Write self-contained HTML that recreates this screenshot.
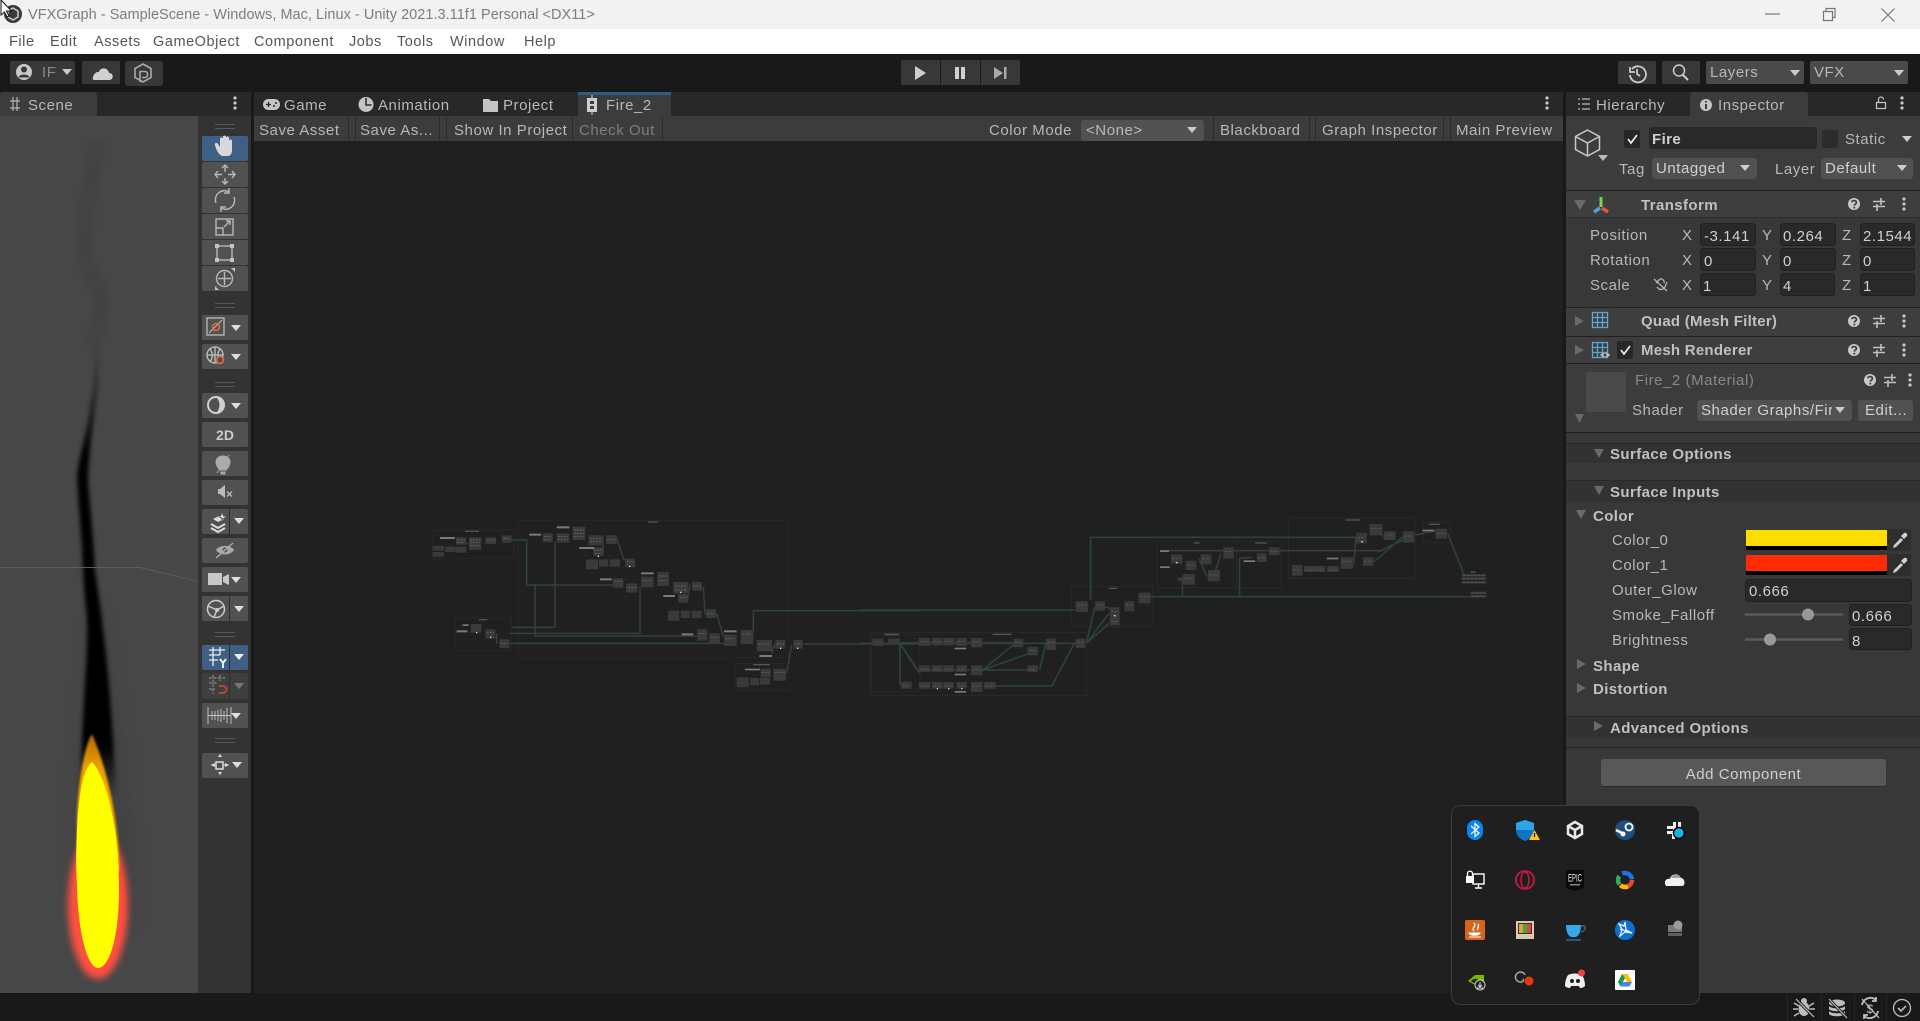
<!DOCTYPE html>
<html><head><meta charset="utf-8"><title>VFXGraph</title>
<style>
html,body{margin:0;padding:0;background:#191919}
#r{position:relative;width:1920px;height:1021px;overflow:hidden;background:#191919;font-family:"Liberation Sans",sans-serif;font-size:15px;color:#b8b8b8}
#r div{position:absolute}
.t{white-space:nowrap;line-height:20px;height:20px;letter-spacing:.55px;margin-top:1px}
.m{color:#555;letter-spacing:.55px;font-size:14.5px;margin-top:0}
.b{font-weight:bold;color:#c0c0c0;letter-spacing:.4px}
.n{color:#d0d0d0}
svg{position:absolute;left:0;top:0}
</style></head><body><div id="r">
<div style="left:0;top:0;width:1920px;height:29px;background:#f2f2f2"></div>
<div style="left:0;top:29px;width:1920px;height:25px;background:#fff"></div>
<div style="left:0;top:92px;width:251px;height:24px;background:#282828"></div>
<div style="left:0;top:92px;width:97px;height:24px;background:#3c3c3c;border-radius:3px 3px 0 0"></div>
<div style="left:0;top:116px;width:198px;height:877px;background:#474747"></div>
<div style="left:198px;top:116px;width:53px;height:877px;background:#333"></div>
<div style="left:254px;top:92px;width:1309px;height:24px;background:#282828"></div>
<div style="left:578px;top:92px;width:93px;height:24px;background:#3c3c3c;border-top:3px solid #2c5d87;box-sizing:border-box"></div>
<div style="left:254px;top:116px;width:1309px;height:25px;background:#3c3c3c"></div>
<div style="left:254px;top:141px;width:1309px;height:852px;background:#202020"></div>
<div style="left:1566px;top:92px;width:354px;height:24px;background:#282828"></div>
<div style="left:1690px;top:92px;width:118px;height:24px;background:#3c3c3c;border-radius:3px 3px 0 0"></div>
<div style="left:1566px;top:116px;width:354px;height:877px;background:#383838"></div>
<div style="left:1566px;top:116px;width:354px;height:74px;background:#3c3c3c"></div>
<div style="left:1566px;top:191px;width:354px;height:26px;background:#3e3e3e"></div>
<div style="left:1566px;top:307px;width:354px;height:29px;background:#3e3e3e"></div>
<div style="left:1566px;top:337px;width:354px;height:26px;background:#3e3e3e"></div>
<div style="left:1566px;top:364px;width:354px;height:68px;background:#3c3c3c"></div>
<div style="left:1566px;top:444px;width:354px;height:19px;background:#323232"></div>
<div style="left:1566px;top:481px;width:354px;height:21px;background:#323232"></div>
<div style="left:1566px;top:717px;width:354px;height:21px;background:#323232"></div>
<div style="left:1566px;top:190px;width:354px;height:1px;background:#1f1f1f"></div>
<div style="left:1566px;top:217px;width:354px;height:1px;background:#2e2e2e"></div>
<div style="left:1566px;top:307px;width:354px;height:1px;background:#222"></div>
<div style="left:1566px;top:336px;width:354px;height:1px;background:#222"></div>
<div style="left:1566px;top:363px;width:354px;height:1px;background:#222"></div>
<div style="left:1566px;top:432px;width:354px;height:1px;background:#222"></div>
<div style="left:1566px;top:443px;width:354px;height:1px;background:#272727"></div>
<div style="left:1566px;top:480px;width:354px;height:1px;background:#272727"></div>
<div style="left:1566px;top:716px;width:354px;height:1px;background:#272727"></div>
<div style="left:1566px;top:747px;width:354px;height:1px;background:#222"></div>
<div style="left:1601px;top:759px;width:285px;height:28px;background:#585858;border-radius:3px;border-bottom:1px solid #2a2a2a;box-sizing:border-box"></div>

<svg width="1920" height="1021" viewBox="0 0 1920 1021">
<defs>
<filter id="b1" x="-50%" y="-20%" width="200%" height="140%"><feGaussianBlur stdDeviation="1"/></filter>
<filter id="b2" x="-50%" y="-20%" width="200%" height="140%"><feGaussianBlur stdDeviation="2.2"/></filter>
<filter id="b3" x="-50%" y="-20%" width="200%" height="140%"><feGaussianBlur stdDeviation="3.5"/></filter>
<filter id="b8" x="-100%" y="-30%" width="300%" height="160%"><feGaussianBlur stdDeviation="7"/></filter>
<linearGradient id="og" x1="0" y1="0" x2="0" y2="1"><stop offset="0" stop-color="#b06800"/><stop offset=".25" stop-color="#f0a000"/><stop offset="1" stop-color="#ffc800"/></linearGradient>
<linearGradient id="sm" gradientUnits="userSpaceOnUse" x1="0" y1="345" x2="0" y2="800"><stop offset="0" stop-color="#000" stop-opacity="0"/><stop offset=".14" stop-color="#000" stop-opacity=".55"/><stop offset=".24" stop-color="#000"/><stop offset=".88" stop-color="#000"/><stop offset="1" stop-color="#000" stop-opacity="0"/></linearGradient>
<path id="da" d="M-5-3H5L0 3z"/>
<g id="hp"><circle r="6" fill="#c8c8c8"/><path d="M-2.2-1.8C-2-4 2.400-4 2.400-1.400 2.400.2.3 0 .3 1.600" fill="none" stroke="#3c3c3c" stroke-width="1.600"/><circle cx=".3" cy="3.600" r="1" fill="#3c3c3c"/></g>
<g id="sl" stroke="#c0c0c0" stroke-width="1.600" fill="none"><path d="M-6-2.500H6M-6 2.500H6M2-6V1M-2 0V7"/></g>
<g id="dt" fill="#c8c8c8"><circle cy="-5" r="1.600"/><circle r="1.600"/><circle cy="5" r="1.600"/></g>
</defs>

<!-- title icons -->
<circle cx="13" cy="14" r="9" fill="#3a3a3a"/><path d="M13 8l5 3v6l-5 3-5-3v-6z" fill="none" stroke="#ccc" stroke-width="1.500"/>
<path d="M1 0v15l3.500-3 2.500 5 2-1-2.500-5h5z" fill="#fff" stroke="#111" stroke-width="1"/>
<path d="M1765 14h15" stroke="#777" stroke-width="1.200"/>
<path d="M1823.500 11.500h9v9h-9zM1826 11V8.500h9v9h-2" fill="none" stroke="#777" stroke-width="1.200"/>
<path d="M1881.500 8.500l13 13M1894.500 8.500l-13 13" stroke="#777" stroke-width="1.200"/>

<!-- main toolbar buttons -->
<g fill="#383838">
<rect x="10" y="61" width="65" height="23" rx="2"/><rect x="82" y="61" width="38" height="23" rx="2"/><rect x="125" y="61" width="38" height="25" rx="3"/>
<rect x="901" y="60" width="119" height="25" rx="2"/>
<rect x="1618" y="61" width="38" height="23" rx="2"/><rect x="1662" y="61" width="38" height="23" rx="2"/></g>
<g fill="#4a4a4a"><rect x="1706" y="61" width="98" height="23" rx="2"/><rect x="1810" y="61" width="98" height="23" rx="2"/></g>
<path d="M940.500 60v25M980.500 60v25" stroke="#1b1b1b"/>
<circle cx="24" cy="72" r="8" fill="#c8c8c8"/><circle cx="24" cy="69.500" r="3" fill="#383838"/><path d="M18.500 77.500c1-4 10-4 11 0z" fill="#383838"/>
<use href="#da" x="67" y="72" fill="#c8c8c8"/>
<path d="M94 80h15c5 0 5-7 0-7-1-6-9-6-10-1-5-1-8 8-5 8z" fill="#d0d0d0"/>
<path d="M143 64l8 4.500v9l-8 4.500-8-4.500v-9zM140 82V71.500h5c3.500 0 3.500 6 0 6h-3" fill="none" stroke="#aaa" stroke-width="1.600"/>
<path d="M915 66l11 7-11 7z" fill="#cfcfcf"/>
<path d="M955 67h4v12h-4zM961 67h4v12h-4z" fill="#cfcfcf"/>
<path d="M994 67l9 6-9 6zM1004 67h2.500v12H1004z" fill="#a9a9a9"/>
<path d="M1632 69a8 8 0 1 1-2 6M1630 67v5h5M1637 69v5l3 2" fill="none" stroke="#ccc" stroke-width="1.800"/>
<circle cx="1679" cy="70.500" r="5.500" fill="none" stroke="#ccc" stroke-width="1.500"/><path d="M1683 75l5 5" stroke="#ccc" stroke-width="2"/>
<use href="#da" x="1795" y="73" fill="#ccc"/><use href="#da" x="1899" y="73" fill="#ccc"/>

<!-- tab icons -->
<path d="M10 101h10M10 108h10M13 97v14M17 97v14" stroke="#b5b5b5" stroke-width="1.200" fill="none"/>
<use href="#dt" x="235" y="103"/>
<rect x="263" y="99" width="17" height="11" rx="5.500" fill="#c4c4c4"/><path d="M266 104.500h5M268.500 102v5" stroke="#282828" stroke-width="1.300"/><circle cx="276" cy="103" r="1" fill="#282828"/><circle cx="274" cy="106" r="1" fill="#282828"/>
<circle cx="366" cy="104.500" r="7.500" fill="#c4c4c4"/><path d="M366 98v7h5.500" fill="none" stroke="#282828" stroke-width="1.500"/>
<path d="M483 99h6l2 2h7v11h-15z" fill="#c4c4c4"/>
<path d="M592 95v3M592 112v3" stroke="#aaa" stroke-width="1.500"/><rect x="587" y="98" width="10" height="14" fill="#cfcfcf"/><rect x="590" y="101" width="4" height="3" fill="#3c3c3c"/><rect x="590" y="106" width="4" height="3" fill="#3c3c3c"/>
<use href="#dt" x="1547" y="103"/>
<use href="#dt" x="1902" y="103"/>
<path d="M1578 99h2M1578 104h2M1578 109h2M1582 99h8M1582 104h8M1582 109h8" stroke="#bbb" stroke-width="1.200"/>
<circle cx="1706" cy="105" r="6" fill="#c4c4c4"/><path d="M1706 104v5M1706 101v1.500" stroke="#3c3c3c" stroke-width="2"/>
<path d="M1876.500 102.500h9v6h-9zM1878.500 102.500v-3a2.500 2.500 0 0 1 5 0" fill="none" stroke="#c4c4c4" stroke-width="1.200"/>

<!-- graph toolbar separators -->
<path d="M348.500 116v25M355.500 116v25M439.500 116v25M446.500 116v25M572.500 116v25M662.500 116v25M1213.500 116v25M1309.500 116v25M1315.500 116v25M1443.500 116v25M1450.500 116v25" stroke="#2b2b2b"/>
<rect x="1081" y="120" width="123" height="21" rx="3" fill="#515151"/>
<use href="#da" x="1192" y="130" fill="#ccc"/>

<!-- flame -->
<g>
<path d="M97 140c-4 40-14 70-12 115 2 20 14 25 16 45 1 20-6 35-10 50" fill="none" stroke="#000" stroke-opacity=".06" stroke-width="16" filter="url(#b3)"/>
<path d="M96 600c-15 100-25 200-22 300l60 20c0-120-15-230-38-320z" fill="#3c3c3c" opacity=".45" filter="url(#b8)"/>
<path d="M92 345C96 375 93 395 90 405 88 430 80 450 77 476 78 500 82 540 83 570 84 600 88 610 87 640 86 680 82 720 80 800L116 800C113 720 107 660 103 629 100 600 97 585 95 570 93 530 90 510 88 480 89 450 94 420 98 385 99 370 99 355 98 345z" fill="url(#sm)" filter="url(#b2)"/>
<ellipse cx="98" cy="905" rx="30" ry="74" fill="#ff5040" filter="url(#b3)"/>
<path d="M92 734C85 745 79 775 77 815V870H119C119 835 112 780 92 734z" fill="url(#og)" filter="url(#b1)"/>
<path d="M92 762C84 768 79 790 77 830 76 850 76 870 77 885 78 935 88 968 98 968 110 968 119 935 119 890 119 860 117 835 110 805 106 785 98 768 92 762z" fill="#ff0"/>
<path d="M0 567.500H140L198 581.500" fill="none" stroke="#5c5c5c" stroke-width="1"/>
</g>

<!-- scene overlay -->
<g fill="#515151">
<rect x="202" y="162" width="46" height="25" rx="2"/><rect x="202" y="188" width="46" height="25" rx="2"/><rect x="202" y="214" width="46" height="25" rx="2"/><rect x="202" y="240" width="46" height="25" rx="2"/><rect x="202" y="266" width="46" height="25" rx="2"/>
<rect x="202" y="315" width="46" height="25" rx="2"/><rect x="202" y="344" width="46" height="25" rx="2"/><rect x="202" y="393" width="46" height="25" rx="2"/><rect x="202" y="422" width="46" height="25" rx="2"/><rect x="202" y="451" width="46" height="25" rx="2"/><rect x="202" y="480" width="46" height="25" rx="2"/><rect x="202" y="509" width="46" height="25" rx="2"/><rect x="202" y="538" width="46" height="25" rx="2"/><rect x="202" y="567" width="46" height="25" rx="2"/><rect x="202" y="596" width="46" height="25" rx="2"/><rect x="202" y="703" width="46" height="25" rx="2"/><rect x="202" y="753" width="46" height="25" rx="2"/></g>
<rect x="202" y="136" width="46" height="25" rx="2" fill="#3f5f85"/><rect x="202" y="645" width="46" height="25" rx="2" fill="#3f5f85"/><rect x="202" y="673" width="46" height="26" rx="2" fill="#3f3f3f"/>
<path d="M215 124.500h20M215 128.500h20M215 303.500h20M215 307.500h20M215 382.500h20M215 386.500h20M215 632.500h20M215 636.500h20M215 738.500h20M215 742.500h20" stroke="#585858"/>
<path d="M229.500 509v25M229.500 596v25M229.500 645v25M229.500 673v26" stroke="#2e2e2e"/>
<!-- hand -->
<path d="M222 156c-4-2-6-7-7-11-1-2 2-3 3-1l2 3v-8c0-2 3-2 3 0v6-8c0-2 3-2 3 0v8-7c0-2 3-2 3 0v8-5c0-2 3-2 3 0v9c0 4-2 6-4 6z" fill="#d8d8d8"/>
<!-- move -->
<g fill="none" stroke="#b8b8b8" stroke-width="1.400"><path d="M225 165v7M225 178v6M215 174.500h7M228 174.500h7M222 168l3-3 3 3M222 181l3 3 3-3M218 171l-3 3.500 3 3.500M232 171l3 3.500-3 3.500"/>
<path d="M216 203a9 9 0 0 1 13-11M234 197a9 9 0 0 1-13 11M229 188v5h-5M221 212v-5h5"/>
<rect x="216" y="219" width="17" height="16"/><path d="M216 228h7v7M224 227l6-6M226 221h4v4"/>
<rect x="217" y="246" width="15" height="14"/></g>
<g fill="#c4c4c4"><rect x="215" y="244" width="4" height="4"/><rect x="230" y="244" width="4" height="4"/><rect x="215" y="258" width="4" height="4"/><rect x="230" y="258" width="4" height="4"/></g>
<g fill="none" stroke="#b8b8b8" stroke-width="1.400"><circle cx="224.500" cy="278.500" r="8"/><path d="M224.500 272v13M218 278.500h13"/></g>
<path d="M231 268h4v4zM215 290v-4l4 4z" fill="#c4c4c4"/>
<rect x="207" y="318" width="17" height="17" fill="none" stroke="#c4c4c4" stroke-width="1.200"/><path d="M209 333l13-13" stroke="#c4c4c4"/><circle cx="216" cy="327" r="3.500" fill="none" stroke="#e8673f" stroke-width="1.600"/>
<g fill="none" stroke="#c4c4c4" stroke-width="1.300"><circle cx="215" cy="355" r="8"/><path d="M207 355h16M215 347v16M210 349c3 4 3 9 0 13M220 349c-3 4-3 9 0 13"/></g><circle cx="220" cy="360" r="3.500" fill="#515151" stroke="#e8673f" stroke-width="1.600"/>
<circle cx="216" cy="405" r="8" fill="none" stroke="#d0d0d0" stroke-width="2"/><path d="M216 397a8 8 0 0 1 0 16 11 11 0 0 0 0-16z" fill="#d0d0d0"/>
<use href="#da" x="236" y="328" fill="#ddd"/><use href="#da" x="236" y="357" fill="#ddd"/><use href="#da" x="236" y="406" fill="#ddd"/>
<path d="M220 470c-2-2-4-5-4-8 0-8 14-8 14 0 0 3-2 6-4 8zM221 472h4v2h-4zM217 473l12-18" fill="#aaa" stroke="#aaa"/>
<path d="M218 489h2l5-4v13l-5-4h-2z" fill="#bbb"/><path d="M227 491.500l5 5M232 491.500l-5 5" stroke="#bbb" stroke-width="1.300"/>
<path d="M211 524l7 4 7-4M211 528l7 4 7-4" fill="none" stroke="#ddd" stroke-width="2"/><path d="M213 519l5 3 6-3-5-3zM222 513l1 3 3 1-3 1-1 3-1-3-3-1 3-1z" fill="#ddd"/>
<use href="#da" x="239" y="521" fill="#ddd"/>
<path d="M216 550c3-5 14-6 18 0-4 6-14 6-18 0z" fill="#aaa"/><circle cx="225" cy="550" r="2.500" fill="#515151"/><path d="M216 558l17-15" stroke="#aaa" stroke-width="1.500"/>
<path d="M208 573h14v12h-14zM223 577l6-3v11l-6-3z" fill="#c8c8c8"/><use href="#da" x="236" y="580" fill="#ddd"/>
<g fill="none" stroke="#ccc" stroke-width="1.500"><circle cx="216" cy="609" r="8.500"/><path d="M208 606l9 4 7-4M217 610l-3 7"/></g><circle cx="217" cy="610" r="2" fill="#ccc"/><use href="#da" x="239" y="609" fill="#ddd"/>
<g stroke="#e8eef5" stroke-width="1.300" fill="none"><path d="M209 650h16M209 655h11M209 660h9M213 647v19M220 647v8"/></g><path d="M220 659l3 4 3-4M223 663v5" stroke="#e8eef5" stroke-width="2" fill="none"/><use href="#da" x="239" y="657" fill="#eee"/>
<g stroke="#8a8a8a" stroke-width="1.200" fill="none" stroke-dasharray="3 1.500"><path d="M209 678h16M209 683h8M209 689h6M213 675v19M220 675v6"/></g><path d="M219 686h4a3.500 3.500 0 0 1 0 7h-4" fill="none" stroke="#b5492f" stroke-width="2"/><use href="#da" x="239" y="686" fill="#777"/>
<path d="M208 707v17M212 711v9M215 711v9M218 710v11M221 709v13M224 711v9M227 708v15M231 707v17M208 715.500h23" stroke="#c0c0c0" stroke-width="1"/><use href="#da" x="236" y="716" fill="#ddd"/>
<path d="M211 765l4-2v4zM229 765l-4-2v4zM218 757l2-3 2 3zM218 772l2 3 2-3z" fill="#ddd"/><rect x="216" y="762" width="7" height="7" fill="none" stroke="#ddd" stroke-width="1.500"/><path d="M215 765h-4M229 765h-5" stroke="#ddd"/><use href="#da" x="237" y="765" fill="#ddd"/>

<!-- graph group 1 -->
<g transform="translate(420 500) scale(.33333)">
<g fill="none" stroke="#292929" stroke-width="2.500"><rect x="38" y="90" width="245" height="85"/><rect x="295" y="62" width="810" height="410"/><rect x="105" y="352" width="170" height="100"/><rect x="945" y="490" width="160" height="80"/><rect x="1355" y="405" width="145" height="170"/></g>
<g fill="none" stroke="#2f4438" stroke-width="4.500">
<path d="M275 120H320V255H580M345 255V408H832M405 125V382H275M270 400H660V260M265 430H915M1000 400V332H1500M1150 432H1500M1440 428V555M1440 430L1500 520M590 115L612 180M850 260L855 345M890 340L910 410M1100 520L1115 435M1055 460L1065 432M550 135V160M805 290L810 250M230 400V430M145 130H110"/></g>
<g fill="#3a3a3a">
<rect x="108" y="112" width="30" height="22"/><rect x="147" y="112" width="37" height="37"/><rect x="196" y="112" width="32" height="20"/><rect x="245" y="106" width="30" height="22"/><rect x="38" y="138" width="34" height="14"/><rect x="75" y="140" width="30" height="16"/><rect x="106" y="140" width="32" height="18"/><rect x="38" y="156" width="34" height="14"/>
<rect x="368" y="100" width="30" height="26"/><rect x="410" y="100" width="38" height="28"/><rect x="458" y="80" width="38" height="40"/><rect x="505" y="106" width="46" height="30"/><rect x="558" y="106" width="32" height="26"/><rect x="520" y="142" width="30" height="26"/><rect x="498" y="178" width="36" height="30"/><rect x="537" y="178" width="28" height="22"/><rect x="570" y="178" width="30" height="22"/><rect x="615" y="176" width="30" height="26"/>
<rect x="578" y="235" width="32" height="28"/><rect x="618" y="250" width="34" height="28"/><rect x="663" y="230" width="38" height="32"/><rect x="712" y="216" width="35" height="42"/><rect x="760" y="246" width="45" height="34"/><rect x="816" y="246" width="30" height="26"/><rect x="775" y="282" width="30" height="26"/><rect x="744" y="332" width="34" height="30"/><rect x="782" y="332" width="28" height="22"/><rect x="815" y="332" width="30" height="22"/><rect x="858" y="328" width="30" height="26"/>
<rect x="832" y="388" width="30" height="34"/><rect x="868" y="400" width="32" height="28"/><rect x="912" y="404" width="38" height="34"/><rect x="962" y="390" width="38" height="42"/><rect x="1010" y="420" width="46" height="34"/><rect x="1066" y="420" width="30" height="26"/><rect x="1120" y="420" width="28" height="26"/>
<rect x="152" y="372" width="32" height="26"/><rect x="196" y="388" width="30" height="28"/><rect x="238" y="418" width="30" height="26"/>
<rect x="1022" y="506" width="30" height="26"/><rect x="1060" y="506" width="38" height="36"/><rect x="950" y="532" width="36" height="30"/><rect x="990" y="534" width="28" height="22"/><rect x="1020" y="534" width="30" height="20"/>
<rect x="1360" y="416" width="30" height="22"/><rect x="1405" y="416" width="32" height="16"/><rect x="1445" y="545" width="30" height="20"/></g>
<g fill="#7a7a7a">
<rect x="60" y="111" width="45" height="6"/><rect x="328" y="101" width="35" height="6"/><rect x="410" y="79" width="38" height="6"/><rect x="478" y="141" width="45" height="6"/><rect x="540" y="235" width="35" height="6"/><rect x="663" y="217" width="38" height="6"/><rect x="730" y="285" width="35" height="6"/><rect x="785" y="400" width="35" height="6"/><rect x="912" y="391" width="38" height="6"/><rect x="1018" y="465" width="38" height="6"/><rect x="110" y="391" width="32" height="6"/><rect x="128" y="373" width="18" height="5"/><rect x="975" y="506" width="45" height="5"/>
<rect x="135" y="92" width="42" height="4" fill="#555"/><rect x="685" y="64" width="28" height="4" fill="#555"/><rect x="176" y="357" width="26" height="4" fill="#555"/><rect x="1000" y="492" width="50" height="4" fill="#555"/><rect x="1395" y="402" width="42" height="4" fill="#555"/></g>
<g fill="#ddd"><rect x="533" y="167" width="4" height="4"/><rect x="627" y="197" width="4" height="4"/><rect x="780" y="275" width="4" height="4"/><rect x="168" y="396" width="4" height="4"/><rect x="210" y="410" width="4" height="4"/><rect x="1080" y="443" width="4" height="4"/><rect x="1131" y="443" width="4" height="4"/></g>
<g stroke="#6e6e6e" stroke-width="2" stroke-dasharray="6 3"><path d="M112 120h22M112 127h20M150 120h30M150 128h30M150 136h30M200 120h24M250 115h20M372 110h22M372 118h20M414 110h30M414 118h30M462 90h30M462 100h30M462 110h30M510 115h36M510 125h36M562 118h24M520 150h26M524 160h20M620 185h20M584 245h22M624 262h24M668 242h28M716 228h26M716 242h26M765 258h36M765 270h36M820 258h22M780 292h20M862 340h20M836 400h20M872 412h22M916 415h28M966 402h28M1014 432h36M1070 432h22M1124 432h20M200 398h22M242 430h20M1026 518h22M1064 518h30"/></g>
</g>

<!-- graph group 2 -->
<g transform="translate(860 500) scale(.40816 .33333)">
<g fill="none" stroke="#292929" stroke-width="1"><rect x="25" y="398" width="530" height="188" vector-effect="non-scaling-stroke"/><rect x="518" y="260" width="200" height="120" vector-effect="non-scaling-stroke"/><rect x="728" y="125" width="195" height="138" vector-effect="non-scaling-stroke"/><rect x="922" y="125" width="110" height="138" vector-effect="non-scaling-stroke"/><rect x="1050" y="55" width="310" height="180" vector-effect="non-scaling-stroke"/><rect x="1380" y="68" width="65" height="60" vector-effect="non-scaling-stroke"/></g>
<g fill="none" stroke="#2c4240" stroke-width="1.600">
<path vector-effect="non-scaling-stroke" d="M0 430H530M0 330H525M565 300V112H1215M700 290H1500M98 430V555M98 430L140 510H270M300 510L380 430M300 510L415 460M300 510H410M440 510L455 430M330 558H470L525 430M555 430L575 320M555 430L610 340M555 430L610 370M600 320L612 325M100 428H375M790 290V235M930 290V175L960 172M870 215L885 160M1440 100L1480 225M1360 105L1410 92M1260 185L1330 110M1270 155L1330 120M1210 190L1215 110M1250 80L1285 110M830 175L850 230"/>
<path vector-effect="non-scaling-stroke" stroke="#3d3a3a" d="M735 152H1280"/></g>
<g fill="#3a3a3a">
<rect x="30" y="416" width="25" height="20"/><rect x="70" y="416" width="28" height="16"/><rect x="144" y="414" width="28" height="24"/><rect x="176" y="414" width="26" height="22"/><rect x="204" y="414" width="28" height="22"/><rect x="236" y="414" width="26" height="24"/><rect x="272" y="414" width="28" height="28"/><rect x="376" y="416" width="24" height="26"/><rect x="410" y="440" width="26" height="26"/><rect x="456" y="416" width="24" height="34"/><rect x="528" y="416" width="24" height="28"/>
<rect x="144" y="496" width="28" height="20"/><rect x="176" y="496" width="26" height="20"/><rect x="204" y="496" width="26" height="20"/><rect x="236" y="496" width="26" height="20"/><rect x="272" y="496" width="28" height="30"/><rect x="410" y="496" width="26" height="20"/>
<rect x="100" y="546" width="26" height="20"/><rect x="144" y="546" width="28" height="20"/><rect x="176" y="546" width="26" height="20"/><rect x="204" y="546" width="26" height="20"/><rect x="236" y="546" width="26" height="20"/><rect x="272" y="546" width="28" height="30"/><rect x="304" y="546" width="28" height="20"/>
<rect x="528" y="304" width="30" height="32"/><rect x="576" y="304" width="24" height="28"/><rect x="612" y="322" width="24" height="32"/><rect x="612" y="354" width="24" height="22"/><rect x="648" y="304" width="24" height="30"/><rect x="682" y="278" width="30" height="32"/>
<rect x="762" y="163" width="28" height="28"/><rect x="798" y="182" width="26" height="28"/><rect x="835" y="163" width="26" height="30"/><rect x="790" y="222" width="30" height="32"/><rect x="852" y="210" width="30" height="34"/><rect x="890" y="142" width="26" height="34"/><rect x="778" y="232" width="12" height="10"/>
<rect x="972" y="160" width="24" height="26"/><rect x="1002" y="142" width="26" height="24"/>
<rect x="1216" y="98" width="26" height="32"/><rect x="1248" y="72" width="32" height="34"/><rect x="1284" y="94" width="28" height="26"/><rect x="1330" y="94" width="28" height="34"/><rect x="1058" y="195" width="26" height="32"/><rect x="1088" y="198" width="28" height="18"/><rect x="1114" y="198" width="26" height="18"/><rect x="1145" y="198" width="28" height="18"/><rect x="1178" y="172" width="30" height="34"/><rect x="1232" y="172" width="26" height="26"/>
<rect x="1410" y="86" width="28" height="30"/><rect x="1474" y="222" width="60" height="8"/><rect x="1474" y="232" width="60" height="8"/><rect x="1474" y="243" width="60" height="8"/><rect x="1495" y="275" width="40" height="8"/><rect x="1495" y="285" width="40" height="8"/></g>
<g fill="#7a7a7a"><rect x="232" y="443" width="28" height="5"/><rect x="232" y="521" width="28" height="5"/><rect x="232" y="573" width="28" height="5"/><rect x="735" y="151" width="22" height="5"/><rect x="735" y="199" width="24" height="5"/><rect x="940" y="181" width="28" height="5"/><rect x="1144" y="173" width="28" height="5"/><rect x="1378" y="89" width="28" height="5"/>
<g fill="#555"><rect x="60" y="401" width="36" height="4"/><rect x="325" y="401" width="46" height="4"/><rect x="610" y="263" width="20" height="4"/><rect x="818" y="127" width="14" height="4"/><rect x="968" y="127" width="28" height="4"/><rect x="1190" y="58" width="34" height="4"/><rect x="1394" y="71" width="26" height="4"/><rect x="1496" y="214" width="12" height="4"/></g></g>
<g fill="#ddd"><rect x="622" y="345" width="4" height="4"/><rect x="188" y="564" width="3" height="4"/><rect x="216" y="564" width="3" height="4"/><rect x="248" y="564" width="3" height="4"/><rect x="774" y="186" width="4" height="4"/><rect x="1228" y="123" width="4" height="4"/></g>
<g stroke="#6e6e6e" stroke-width="1.500" stroke-dasharray="6 3"><path d="M148 425h20M180 425h18M208 425h20M240 425h18M276 425h20M380 428h16M414 452h18M460 428h16M532 428h16M148 508h20M180 508h18M208 508h18M240 508h18M276 508h20M414 508h18M148 558h20M180 558h18M208 558h18M240 558h18M276 558h20M308 558h20M104 558h18M532 315h22M580 315h16M616 335h16M616 365h16M652 315h16M686 290h22M766 175h20M802 195h18M839 175h18M794 235h22M856 225h22M894 155h18M976 172h16M1006 155h18M1220 112h18M1252 85h24M1288 105h20M1334 108h20M1062 210h18M1092 210h20M1118 210h18M1149 210h20M1182 185h22M1236 185h18M1414 100h20M1478 226h52M1478 236h52M1478 247h52M1499 279h32M1499 289h32"/></g>
</g>

<!-- inspector icons -->
<path d="M1587.500 130l12 6.500v13l-12 6.500-12-6.500v-13zM1575.500 136.500l12 6.500 12-6.500M1587.500 143v13" fill="none" stroke="#c8c8c8" stroke-width="1.500"/>
<use href="#da" x="1603" y="158" fill="#bbb"/>
<rect x="1624" y="130" width="16" height="18" rx="2" fill="#272727"/><path d="M1628 139l3 4 6-8" fill="none" stroke="#e8e8e8" stroke-width="1.800"/>
<rect x="1649" y="127" width="168" height="22" rx="3" fill="#292929"/>
<rect x="1822" y="130" width="16" height="18" rx="2" fill="#2c2c2c"/><use href="#da" x="1907" y="139" fill="#ccc"/>
<g fill="#515151"><rect x="1652" y="158" width="105" height="21" rx="3"/><rect x="1821" y="158" width="92" height="21" rx="3"/><rect x="1697" y="400" width="155" height="21" rx="3"/><rect x="1858" y="400" width="55" height="21" rx="3"/></g>
<use href="#da" x="1745" y="168" fill="#ccc"/><use href="#da" x="1902" y="168" fill="#ccc"/>
<path d="M1574 200h12l-6 10z" fill="#6a6a6a"/>
<path d="M1601 197v10" stroke="#7fd04b" stroke-width="3"/><path d="M1600 208l-6 4" stroke="#4aa3e0" stroke-width="3.500"/><path d="M1602 208l6 4" stroke="#e0573f" stroke-width="3.500"/>
<use href="#hp" x="1854" y="204"/><use href="#sl" x="1879" y="204"/><use href="#dt" x="1904" y="204"/>
<g fill="#292929" stroke="#202020"><rect x="1700.500" y="223.500" width="55" height="22" rx="3"/><rect x="1780.500" y="223.500" width="55" height="22" rx="3"/><rect x="1860.500" y="223.500" width="54" height="22" rx="3"/><rect x="1700.500" y="248.500" width="55" height="22" rx="3"/><rect x="1780.500" y="248.500" width="55" height="22" rx="3"/><rect x="1860.500" y="248.500" width="54" height="22" rx="3"/><rect x="1700.500" y="273.500" width="55" height="22" rx="3"/><rect x="1780.500" y="273.500" width="54" height="22" rx="3"/><rect x="1860.500" y="273.500" width="54" height="22" rx="3"/>
<rect x="1745.500" y="579.500" width="166" height="22" rx="3"/><rect x="1849.500" y="604.500" width="62" height="21" rx="3"/><rect x="1849.500" y="628.500" width="62" height="21" rx="3"/></g>
<g fill="none" stroke="#b5b5b5" stroke-width="1.300"><path d="M1656 283l4-4c2-1 5 2 4 4M1660 290l-3-3M1667 282l-2 5c-1 2-3 3-5 2M1654 279l13 12"/></g>
<path d="M1575 316l9 5-9 5z" fill="#6a6a6a"/>
<path d="M1575 345l9 5-9 5z" fill="#6a6a6a"/>
<g fill="none" stroke="#5aa7cf" stroke-width="1.300"><rect x="1592.500" y="312.500" width="15" height="15"/><path d="M1597.500 312v16M1602.500 312v16M1592 317.500h16M1592 322.500h16"/><rect x="1592.500" y="342.500" width="15" height="15"/><path d="M1597.500 342v16M1602.500 342v16M1592 347.500h16M1592 352.500h16"/></g>
<path d="M1600 355c3-3 8-3 10 0-2 3-7 3-10 0z" fill="#c0c0c0"/><circle cx="1605" cy="355" r="1.500" fill="#3e3e3e"/>
<rect x="1617" y="341" width="16" height="18" rx="2" fill="#272727"/><path d="M1621 350l3 4 6-8" fill="none" stroke="#e8e8e8" stroke-width="1.800"/>
<use href="#hp" x="1854" y="321"/><use href="#sl" x="1879" y="321"/><use href="#dt" x="1904" y="321"/>
<use href="#hp" x="1854" y="350"/><use href="#sl" x="1879" y="350"/><use href="#dt" x="1904" y="350"/>
<use href="#hp" x="1870" y="380"/><use href="#sl" x="1890" y="380"/><use href="#dt" x="1910" y="380"/>
<rect x="1586" y="372" width="40" height="40" fill="#4a4a4a"/>
<path d="M1575 414h9l-4.500 9z" fill="#6a6a6a"/>
<use href="#da" x="1840" y="410" fill="#ccc"/>
<g fill="#6a6a6a"><path d="M1594 449h10l-5 9zM1594 486h10l-5 9zM1576 510h10l-5 9zM1577 659l9 5-9 5zM1577 683l9 5-9 5zM1594 721l9 5-9 5z"/></g>
<rect x="1746" y="530" width="141" height="16" fill="#ffdd00"/><rect x="1746" y="546" width="141" height="4" fill="#000"/>
<rect x="1746" y="555" width="141" height="16" fill="#ff2a00"/><rect x="1746" y="571" width="141" height="4" fill="#000"/>
<rect x="1887" y="529" width="24" height="22" rx="2" fill="#2e2e2e"/><rect x="1887" y="554" width="24" height="22" rx="2" fill="#2e2e2e"/>
<g fill="#d0d0d0"><path d="M1894 545l7-7 2 2-7 7-3 1zM1901 536l3-3c2-1 4 1 3 3l-3 3z"/><path d="M1894 570l7-7 2 2-7 7-3 1zM1901 561l3-3c2-1 4 1 3 3l-3 3z"/></g>
<path d="M1745 614.500h98M1745 639.500h98" stroke="#5a5a5a" stroke-width="2.500"/>
<circle cx="1808" cy="614.500" r="6" fill="#999"/><circle cx="1770" cy="639.500" r="6" fill="#999"/>

<!-- status -->
<path d="M1787.500 993v28M1821.500 993v28M1854.500 993v28M1886.500 993v28" stroke="#262626"/>
<g fill="#bdbdbd"><ellipse cx="1804" cy="1009" rx="5.500" ry="7"/><circle cx="1804" cy="1001" r="3"/></g>
<path d="M1794 1003l5 3M1814 1003l-5 3M1793 1009h5M1815 1009h-5M1794 1016l5-3M1814 1016l-5-3" stroke="#bdbdbd" stroke-width="1.500"/><path d="M1796 999l18 18" stroke="#191919" stroke-width="3"/><path d="M1796 999l18 18" stroke="#bdbdbd" stroke-width="1.200"/>
<g fill="#bdbdbd"><ellipse cx="1837" cy="1003" rx="8" ry="3.500"/><path d="M1829 1006c2 3 14 3 16 0v3c-2 3-14 3-16 0zM1829 1011c2 3 14 3 16 0v3c-2 3-14 3-16 0z"/></g><path d="M1829 999l18 19" stroke="#191919" stroke-width="3"/><path d="M1829 999l18 19" stroke="#bdbdbd" stroke-width="1.200"/>
<g fill="none" stroke="#bdbdbd" stroke-width="1.800"><path d="M1862 1005a8.500 8.500 0 0 1 14-5M1878 1011a8.500 8.500 0 0 1-14 5M1876 997v4h-4M1864 1019v-4h4"/></g><text x="1870" y="1013" fill="#bdbdbd" font-family="Liberation Sans,sans-serif" font-size="12" text-anchor="middle">$</text><path d="M1862 999l17 19" stroke="#bdbdbd" stroke-width="1.200"/>
<circle cx="1902" cy="1008" r="8.500" fill="none" stroke="#bdbdbd" stroke-width="1.300"/><path d="M1898 1008l3 3 5-5" fill="none" stroke="#bdbdbd" stroke-width="1.600"/>

<!-- tray -->
<rect x="1451.500" y="805.500" width="248" height="199" rx="9" fill="#1f1f1f" stroke="#3b3b3b"/>
<rect x="1467" y="820" width="16" height="20" rx="8" fill="#0a84f0"/><path d="M1471 826l8 7-4 3.500v-13l4 3.500-8 7" fill="none" stroke="#fff" stroke-width="1.200"/>
<path d="M1525 820l9 3v7c0 6-4 9-9 11-5-2-9-5-9-11v-7z" fill="#0c73c7"/><path d="M1525 820l9 3v7h-18v-7z" fill="#29a5e8"/><path d="M1529 840l5.500-10 5.500 10z" fill="#ffc800"/><path d="M1534.500 833v4" stroke="#222" stroke-width="1.300"/>
<path d="M1575 822l7 4v8l-7 4-7-4v-8zM1575 830v8M1575 830l-7-4M1575 830l7-4" fill="none" stroke="#e8e8e8" stroke-width="2.500"/>
<circle cx="1625" cy="830" r="10" fill="#1c4f7e"/><circle cx="1629" cy="827" r="3.500" fill="none" stroke="#fff" stroke-width="1.800"/><path d="M1616 830l8 4" stroke="#fff" stroke-width="2.500"/><circle cx="1623" cy="834" r="2.500" fill="#fff"/>
<path d="M1667 826h8v3h-8zM1673 822h3v8h-3zM1667 831h8v3h-8zM1672 833h3v6h-3zM1678 822h3v6h-3z" fill="#eee"/><circle cx="1679" cy="833" r="5.500" fill="#11b5e4" stroke="#000" stroke-width="1.500"/>
<rect x="1473" y="874" width="11" height="10" fill="#1f1f1f" stroke="#fff" stroke-width="1.400"/><path d="M1475 888h7M1478.500 884v4" stroke="#fff" stroke-width="1.400"/><rect x="1466" y="876" width="8" height="7" fill="#fff"/><path d="M1467.500 876v-2.500c0-3 5-3 5 0v2.500" fill="none" stroke="#fff" stroke-width="1.300"/>
<circle cx="1525" cy="880" r="9" fill="none" stroke="#c9183b" stroke-width="1.800"/><ellipse cx="1525" cy="880" rx="4" ry="8" fill="none" stroke="#c9183b" stroke-width="1.500"/>
<path d="M1566 870h18v18l-9 3-9-3z" fill="#0a0a0a"/><text x="1568" y="881.500" fill="#eee" font-family="Liberation Sans,sans-serif" font-size="11" textLength="14" lengthAdjust="spacingAndGlyphs">EPIC</text><rect x="1570" y="884" width="10" height="1.500" fill="#888"/>
<circle cx="1625" cy="880" r="7" fill="none" stroke="#e8453c" stroke-width="4.500" stroke-dasharray="14 30"/><circle cx="1625" cy="880" r="7" fill="none" stroke="#1a73e8" stroke-width="4.500" stroke-dasharray="13 31" stroke-dashoffset="14"/><circle cx="1625" cy="880" r="7" fill="none" stroke="#34a853" stroke-width="4.500" stroke-dasharray="9 35" stroke-dashoffset="27"/><circle cx="1625" cy="880" r="7" fill="none" stroke="#fbbc04" stroke-width="4.500" stroke-dasharray="8 36" stroke-dashoffset="36"/>
<path d="M1666 886c-3-5 1-8 4-7 1-6 9-6 11-1 4 0 5 8 1 8z" fill="#f0f0f0"/><path d="M1671 878c2-5 8-5 10 0z" fill="#9e9e9e"/>
<rect x="1465" y="920" width="20" height="20" rx="2" fill="#d4651e"/><path d="M1474 923c3 3-3 5 0 8M1478 924c2 3-2 4 0 6" fill="none" stroke="#fff" stroke-width="1.300"/><path d="M1469 933h11c0 3-11 3-11 0zM1469 937h12" stroke="#fff" fill="#fff"/>
<rect x="1516" y="921" width="18" height="18" fill="#d8ccb0"/><rect x="1518" y="923" width="14" height="11" fill="#333"/><rect x="1519" y="924" width="4" height="9" fill="#e8a030"/><rect x="1523" y="924" width="4" height="9" fill="#39a845"/><rect x="1527" y="924" width="4" height="9" fill="#e84040"/>
<path d="M1566 925h15c0 8-3 12-6 12h-3c-3 0-6-4-6-12z" fill="#35a8e8"/><path d="M1581 926h3c2 0 2 5-3 6" fill="none" stroke="#1e6ea8" stroke-width="1.400"/><path d="M1566 940h15" stroke="#1e6ea8" stroke-width="1.500"/>
<circle cx="1625" cy="930" r="10" fill="#0e6fd2"/><path d="M1625 922l1 8 6 3-7-1-5 4 2-7-3-5 5 2zM1620 929l11 4" fill="none" stroke="#e8f2ff" stroke-width="1.300"/>
<rect x="1668" y="925" width="14" height="7" fill="#7a7a7a"/><rect x="1668" y="933" width="14" height="3" fill="#5f5f5f"/><circle cx="1678" cy="925" r="4.500" fill="#9a9a9a"/>
<path d="M1468 981l7-6h9v10h-9z" fill="#76b900"/><path d="M1471 981c3-3 6-3 9 0-3 3-6 3-9 0z" fill="#1f1f1f"/><circle cx="1480" cy="985" r="5" fill="#222" stroke="#ccc"/><path d="M1480 982v4M1478 985l2 2 2-2M1477 988h6" stroke="#ddd" fill="none"/>
<path d="M1525 975a5 5 0 1 0-4 7c2 0 3-2 2-3" fill="none" stroke="#aaa" stroke-width="1.500"/><circle cx="1529" cy="981" r="4.500" fill="#e6380f"/>
<path d="M1568 975c4-2 10-2 14 0 2 3 3 7 3 11-2 2-4 2-5 2l-1-2h-8l-1 2c-1 0-3 0-5-2 0-4 1-8 3-11z" fill="#eee"/><circle cx="1572" cy="981" r="2" fill="#1f1f1f"/><circle cx="1578" cy="981" r="2" fill="#1f1f1f"/><circle cx="1581.500" cy="973" r="3.500" fill="#ed4245"/>
<rect x="1615" y="970" width="20" height="20" rx="1" fill="#fff"/><path d="M1622 974h6l4 8h-5z" fill="#fbbc04"/><path d="M1622 974l-4 8 2.500 4.500 4.500-8.500z" fill="#0f9d58"/><path d="M1620.500 986.500l2-4.500h9.500l-2.500 4.500z" fill="#4285f4"/>
</svg>

<!-- text -->
<div class="t" style="left:28px;top:5px;margin-top:0;color:#7d7d7d;letter-spacing:.03px;font-size:14.500px">VFXGraph - SampleScene - Windows, Mac, Linux - Unity 2021.3.11f1 Personal &lt;DX11&gt;</div>
<div class="t m" style="left:9px;top:32px">File</div><div class="t m" style="left:50px;top:32px">Edit</div><div class="t m" style="left:94px;top:32px">Assets</div><div class="t m" style="left:153px;top:32px">GameObject</div><div class="t m" style="left:254px;top:32px">Component</div><div class="t m" style="left:349px;top:32px">Jobs</div><div class="t m" style="left:397px;top:32px">Tools</div><div class="t m" style="left:450px;top:32px">Window</div><div class="t m" style="left:524px;top:32px">Help</div>
<div class="t" style="left:42px;top:62px;color:#8a8a8a">IF</div>
<div class="t" style="left:1710px;top:62px">Layers</div><div class="t" style="left:1814px;top:62px">VFX</div>
<div class="t" style="left:28px;top:95px">Scene</div><div class="t" style="left:284px;top:95px">Game</div><div class="t" style="left:378px;top:95px">Animation</div><div class="t" style="left:503px;top:95px">Project</div><div class="t" style="left:606px;top:95px">Fire_2</div>
<div class="t" style="left:259px;top:120px">Save Asset</div><div class="t" style="left:360px;top:120px">Save As...</div><div class="t" style="left:454px;top:120px">Show In Project</div><div class="t" style="left:579px;top:120px;color:#7d7d7d">Check Out</div>
<div class="t" style="left:989px;top:120px">Color Mode</div><div class="t" style="left:1086px;top:120px">&lt;None&gt;</div>
<div class="t" style="left:1220px;top:120px">Blackboard</div><div class="t" style="left:1322px;top:120px">Graph Inspector</div><div class="t" style="left:1456px;top:120px">Main Preview</div>
<div class="t" style="left:1596px;top:95px">Hierarchy</div><div class="t" style="left:1718px;top:95px">Inspector</div>
<div class="t n b" style="left:1652px;top:129px">Fire</div><div class="t" style="left:1845px;top:129px">Static</div>
<div class="t" style="left:1619px;top:159px">Tag</div><div class="t n" style="left:1656px;top:158px">Untagged</div><div class="t" style="left:1775px;top:159px">Layer</div><div class="t n" style="left:1825px;top:158px">Default</div>
<div class="t b" style="left:1641px;top:195px">Transform</div>
<div class="t" style="left:1590px;top:225px">Position</div><div class="t" style="left:1590px;top:250px">Rotation</div><div class="t" style="left:1590px;top:275px">Scale</div>
<div class="t" style="left:1682px;top:225px">X</div><div class="t" style="left:1762px;top:225px">Y</div><div class="t" style="left:1842px;top:225px">Z</div>
<div class="t" style="left:1682px;top:250px">X</div><div class="t" style="left:1762px;top:250px">Y</div><div class="t" style="left:1842px;top:250px">Z</div>
<div class="t" style="left:1682px;top:275px">X</div><div class="t" style="left:1762px;top:275px">Y</div><div class="t" style="left:1842px;top:275px">Z</div>
<div class="t n" style="left:1704px;top:226px">-3.141</div><div class="t n" style="left:1783px;top:226px">0.264</div><div class="t n" style="left:1863px;top:226px">2.1544</div>
<div class="t n" style="left:1704px;top:251px">0</div><div class="t n" style="left:1783px;top:251px">0</div><div class="t n" style="left:1863px;top:251px">0</div>
<div class="t n" style="left:1703px;top:276px">1</div><div class="t n" style="left:1783px;top:276px">4</div><div class="t n" style="left:1863px;top:276px">1</div>
<div class="t b" style="left:1641px;top:311px;letter-spacing:.25px">Quad (Mesh Filter)</div><div class="t b" style="left:1641px;top:340px;letter-spacing:.25px">Mesh Renderer</div>
<div class="t" style="left:1635px;top:370px;color:#888">Fire_2 (Material)</div><div class="t" style="left:1632px;top:400px">Shader</div>
<div class="t n" style="left:1701px;top:400px;width:131px;overflow:hidden">Shader Graphs/Fire</div><div class="t n" style="left:1865px;top:400px">Edit...</div>
<div class="t b" style="left:1610px;top:444px">Surface Options</div><div class="t b" style="left:1610px;top:482px">Surface Inputs</div><div class="t b" style="left:1593px;top:506px">Color</div>
<div class="t" style="left:1612px;top:530px">Color_0</div><div class="t" style="left:1612px;top:555px">Color_1</div><div class="t" style="left:1612px;top:580px">Outer_Glow</div><div class="t" style="left:1612px;top:605px">Smoke_Falloff</div><div class="t" style="left:1612px;top:630px">Brightness</div>
<div class="t n" style="left:1749px;top:581px">0.666</div><div class="t n" style="left:1852px;top:606px">0.666</div><div class="t n" style="left:1852px;top:631px">8</div>
<div class="t b" style="left:1593px;top:656px">Shape</div><div class="t b" style="left:1593px;top:679px">Distortion</div><div class="t b" style="left:1610px;top:718px">Advanced Options</div>
<div class="t n" style="left:1601px;top:764px;width:285px;text-align:center">Add Component</div>
<div style="left:202px;top:425px;width:46px;text-align:center;font-weight:bold;font-size:14px;line-height:20px;color:#ccc">2D</div>
</div></body></html>
